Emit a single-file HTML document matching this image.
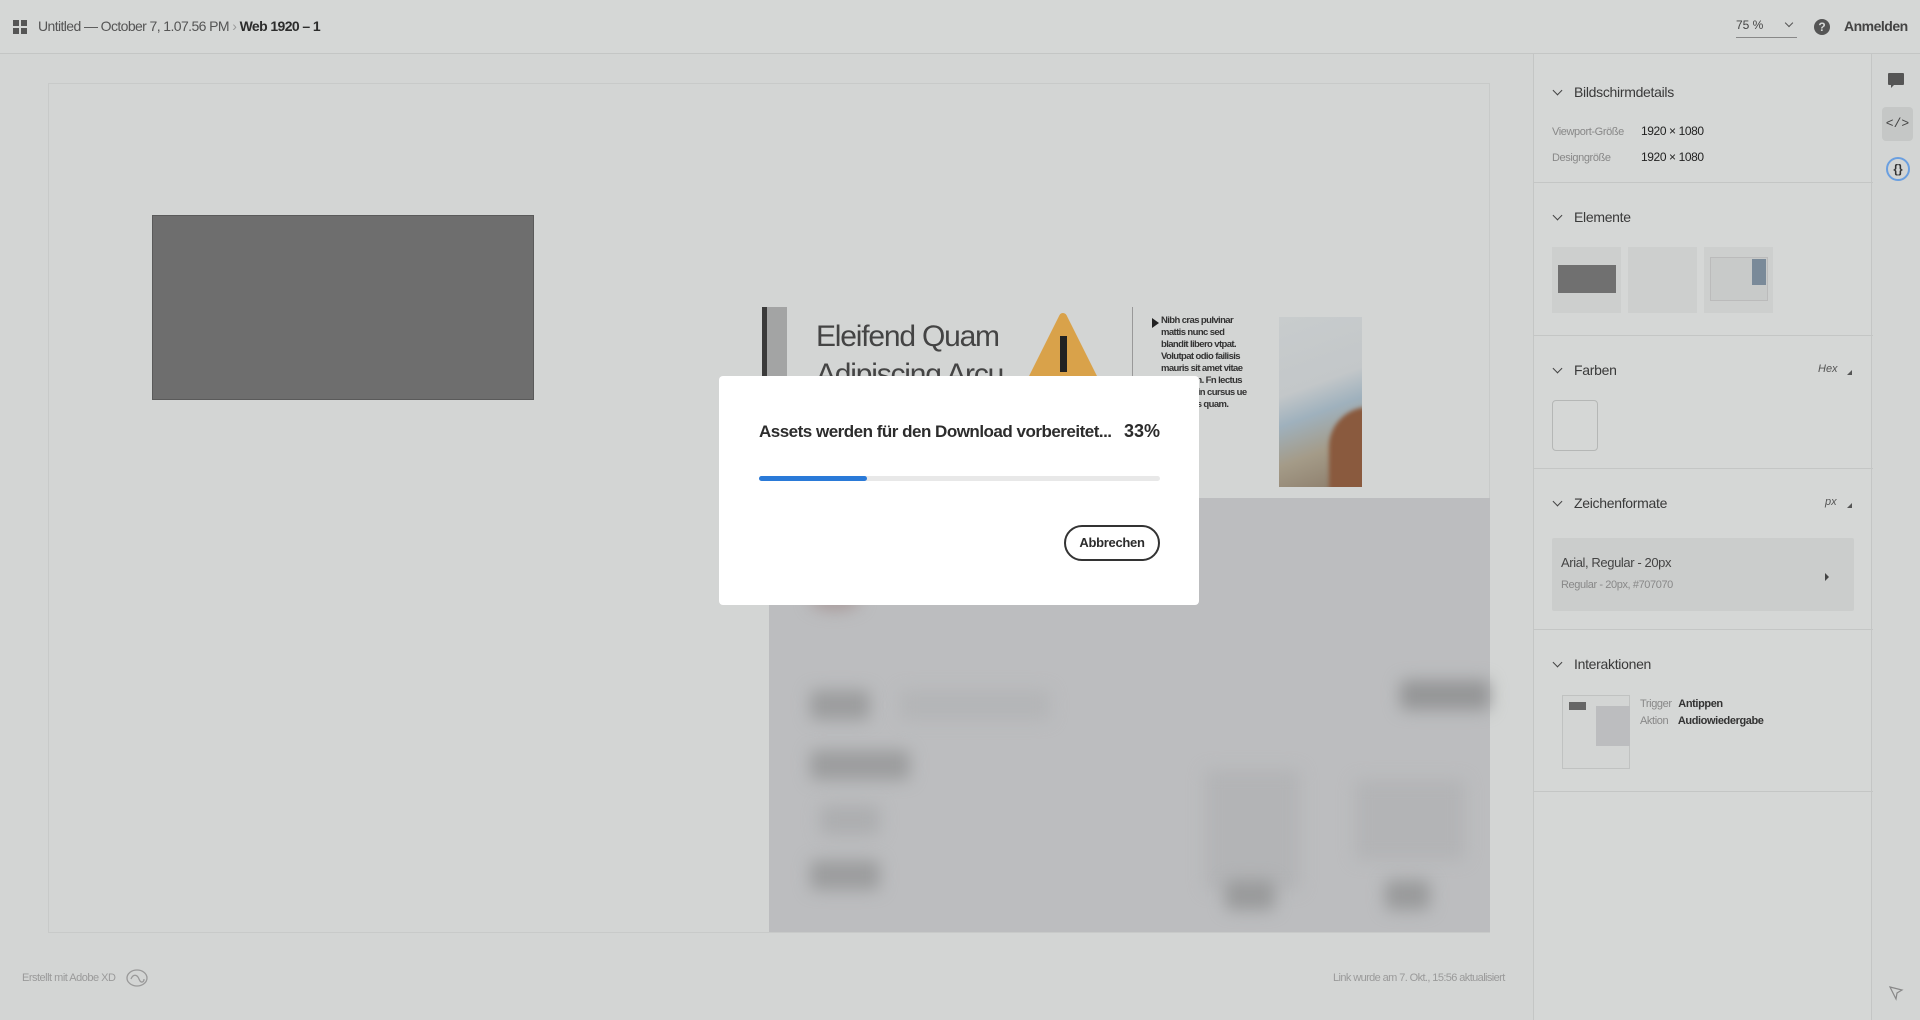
<!DOCTYPE html>
<html><head><meta charset="utf-8"><style>
*{margin:0;padding:0;box-sizing:border-box}
body{width:1920px;height:1020px;overflow:hidden;background:#d3d5d4;font-family:"Liberation Sans",sans-serif;color:#2c2c2c;position:relative}
.abs{position:absolute}
.hdr{left:0;top:0;width:1920px;height:54px;border-bottom:1px solid #c4c6c5;background:#d5d7d6}
.t{white-space:nowrap}
.panel{left:1533px;top:54px;width:339px;height:966px;border-left:1px solid #c4c6c5;border-right:1px solid #c4c6c5;background:#d5d7d6}
.sec{position:absolute;left:0;width:339px;border-bottom:1px solid #c4c6c5}
.sh{position:absolute;left:40px;font-size:14px;color:#3a3a3a;letter-spacing:-0.3px}
.chev{position:absolute;left:20px;width:7px;height:7px;border-right:1.6px solid #444;border-bottom:1.6px solid #444;transform:rotate(45deg)}
.lbl{font-size:11px;color:#888;letter-spacing:-0.4px}
.val{font-size:12px;color:#222;letter-spacing:-0.4px}
.blob{position:absolute;background:#9c9d9e;filter:blur(8px);border-radius:6px}
.corner{position:absolute;width:0;height:0;border-right:5px solid #555;border-top:5px solid transparent}
</style></head><body>
<div class="abs hdr"></div>
<div class="abs" style="left:13px;top:20px;width:6px;height:6px;background:#555"></div>
<div class="abs" style="left:21px;top:20px;width:6px;height:6px;background:#555"></div>
<div class="abs" style="left:13px;top:28px;width:6px;height:6px;background:#555"></div>
<div class="abs" style="left:21px;top:28px;width:6px;height:6px;background:#555"></div>
<div class="abs t" style="left:38px;top:18px;font-size:14px;color:#555;letter-spacing:-0.6px">Untitled — October 7, 1.07.56 PM <span style="color:#999">›</span> <b style="color:#2c2c2c">Web 1920 – 1</b></div>
<div class="abs t" style="left:1736px;top:18px;font-size:12px;color:#444">75 %</div>
<div class="abs" style="left:1786px;top:20px;width:6px;height:6px;border-right:1.5px solid #555;border-bottom:1.5px solid #555;transform:rotate(45deg)"></div>
<div class="abs" style="left:1736px;top:37px;width:61px;height:1px;background:#888"></div>
<div class="abs" style="left:1814px;top:19px;width:16px;height:16px;border-radius:50%;background:#555;color:#d5d7d6;font-size:12px;font-weight:bold;text-align:center;line-height:16px">?</div>
<div class="abs t" style="left:1844px;top:18px;font-size:14px;font-weight:bold;color:#444;letter-spacing:-0.5px">Anmelden</div>

<!-- artboard -->
<div class="abs" style="left:48px;top:83px;width:1442px;height:850px;border:1px solid #c8cac9;background:#d3d5d4"></div>
<div class="abs" style="left:152px;top:215px;width:382px;height:185px;background:#6e6e6e;border:1px solid #5a5a5a"></div>
<div class="abs" style="left:769px;top:498px;width:721px;height:434px;background:#bcbdbf"></div>
<div class="blob" style="left:810px;top:690px;width:60px;height:30px"></div>
<div class="blob" style="left:900px;top:690px;width:150px;height:30px;background:#b4b5b7"></div>
<div class="blob" style="left:810px;top:750px;width:100px;height:30px"></div>
<div class="blob" style="left:820px;top:805px;width:60px;height:30px;background:#adaeb0"></div>
<div class="blob" style="left:810px;top:860px;width:70px;height:30px"></div>
<div class="blob" style="left:1400px;top:680px;width:90px;height:30px;background:#959697"></div>
<div class="blob" style="left:1205px;top:770px;width:95px;height:120px;background:#b3b4b6"></div>
<div class="blob" style="left:1355px;top:780px;width:110px;height:80px;background:#b3b4b6"></div>
<div class="blob" style="left:1225px;top:880px;width:50px;height:30px;background:#999a9b"></div>
<div class="blob" style="left:1385px;top:880px;width:45px;height:30px;background:#999a9b"></div>
<div class="blob" style="left:810px;top:590px;width:50px;height:20px;background:#a89a9a;border-radius:50%"></div>

<div class="abs" style="left:762px;top:307px;width:25px;height:80px;background:#a3a4a4;border-left:5px solid #3a3a3a"></div>
<div class="abs t" style="left:816px;top:318px;font-size:30px;color:#444;line-height:38px;letter-spacing:-1.2px">Eleifend Quam<br>Adipiscing Arcu</div>
<svg class="abs" style="left:1020px;top:312px" width="90" height="80"><path d="M43 5 L8 75 L78 75 Z" fill="#d9a24a" stroke="#d9a24a" stroke-width="8" stroke-linejoin="round"/><rect x="40" y="24" width="7" height="36" fill="#222"/></svg>
<div class="abs" style="left:1132px;top:307px;width:1px;height:190px;background:#999"></div>
<div class="abs" style="left:1152px;top:318px;width:0;height:0;border-left:7px solid #222;border-top:5px solid transparent;border-bottom:5px solid transparent"></div>
<div class="abs" style="left:1161px;top:315px;font-size:9.5px;line-height:12px;color:#333;font-weight:bold;letter-spacing:-0.6px;width:88px">Nibh cras pulvinar mattis nunc sed blandit libero vtpat. Volutpat odio failisis mauris sit amet vitae dimentum. Fn lectus uris eros in cursus ue et leo duis quam.</div>
<div class="abs" style="left:1279px;top:317px;width:83px;height:170px;overflow:hidden;background:linear-gradient(160deg,#c8cccd 0%,#c3c7c9 40%,#9fb1bd 55%,#a49b88 75%,#8a7a68 100%)">
<div class="abs" style="left:50px;top:90px;width:50px;height:90px;background:#8a5a3e;border-radius:40px 0 0 0;filter:blur(2px)"></div></div>

<!-- modal -->
<div class="abs" style="left:719px;top:376px;width:480px;height:229px;background:#fff;border-radius:4px"></div>
<div class="abs t" style="left:759px;top:422px;font-size:17px;font-weight:bold;color:#2c2c2c;letter-spacing:-0.5px">Assets werden für den Download vorbereitet...</div>
<div class="abs t" style="left:1124px;top:421px;font-size:18px;font-weight:bold;color:#2c2c2c">33%</div>
<div class="abs" style="left:759px;top:476px;width:401px;height:5px;background:#e8e8e8;border-radius:3px"></div>
<div class="abs" style="left:759px;top:476px;width:108px;height:5px;background:#2a7ad8;border-radius:3px"></div>
<div class="abs" style="left:1064px;top:525px;width:96px;height:36px;border:2px solid #333;border-radius:18px;font-size:13px;font-weight:bold;text-align:center;line-height:32px;color:#2c2c2c;letter-spacing:-0.3px">Abbrechen</div>

<!-- footer -->
<div class="abs t" style="left:22px;top:972px;font-size:11px;color:#9a9a9a;letter-spacing:-0.5px">Erstellt mit Adobe XD</div>
<svg class="abs" style="left:125px;top:968px" width="24" height="20"><ellipse cx="12" cy="10" rx="10" ry="8" fill="none" stroke="#999" stroke-width="1.3"/><path d="M6 11c2-5 6-5 8 0s5 3 5 0" fill="none" stroke="#999" stroke-width="1.3"/></svg>
<div class="abs t" style="left:1333px;top:972px;font-size:11px;color:#9a9a9a;letter-spacing:-0.6px">Link wurde am 7. Okt., 15:56 aktualisiert</div>

<!-- panel -->
<div class="abs panel">
 <div class="sec" style="top:0;height:129px">
  <div class="chev" style="top:33px"></div><div class="sh t" style="top:30px">Bildschirmdetails</div>
  <div class="abs lbl t" style="left:18px;top:72px">Viewport-Größe</div><div class="abs val t" style="left:107px;top:70px">1920 × 1080</div>
  <div class="abs lbl t" style="left:18px;top:98px">Designgröße</div><div class="abs val t" style="left:107px;top:96px">1920 × 1080</div>
 </div>
 <div class="sec" style="top:129px;height:153px">
  <div class="chev" style="top:29px"></div><div class="sh t" style="top:26px">Elemente</div>
  <div class="abs" style="left:18px;top:64px;width:69px;height:66px;background:#cdcfce"><div class="abs" style="left:6px;top:18px;width:58px;height:28px;background:#707070"></div></div>
  <div class="abs" style="left:94px;top:64px;width:69px;height:66px;background:#cdcfce"></div>
  <div class="abs" style="left:170px;top:64px;width:69px;height:66px;background:#cdcfce"><div class="abs" style="left:6px;top:10px;width:58px;height:44px;background:#c8cac9;border:1px solid #bbb"></div><div class="abs" style="left:48px;top:12px;width:14px;height:26px;background:#7a8a99"></div></div>
 </div>
 <div class="sec" style="top:282px;height:133px">
  <div class="chev" style="top:29px"></div><div class="sh t" style="top:26px">Farben</div>
  <div class="abs t" style="left:284px;top:27px;font-size:11px;font-style:italic;color:#555">Hex</div>
  <div class="corner" style="left:313px;top:34px"></div>
  <div class="abs" style="left:18px;top:64px;width:46px;height:51px;border:1px solid #b5b7b6;border-radius:4px"></div>
 </div>
 <div class="sec" style="top:415px;height:161px">
  <div class="chev" style="top:29px"></div><div class="sh t" style="top:26px">Zeichenformate</div>
  <div class="abs t" style="left:291px;top:27px;font-size:11px;font-style:italic;color:#555">px</div>
  <div class="corner" style="left:313px;top:34px"></div>
  <div class="abs" style="left:18px;top:69px;width:302px;height:73px;background:#cbcdcc;border-radius:2px">
   <div class="abs t" style="left:9px;top:17px;font-size:13px;color:#444;letter-spacing:-0.4px">Arial, Regular - 20px</div>
   <div class="abs t" style="left:9px;top:41px;font-size:11px;color:#888;letter-spacing:-0.4px">Regular - 20px, #707070</div>
   <div class="abs" style="left:273px;top:35px;border-left:4px solid #444;border-top:4px solid transparent;border-bottom:4px solid transparent"></div>
  </div>
 </div>
 <div class="sec" style="top:576px;height:162px">
  <div class="chev" style="top:29px"></div><div class="sh t" style="top:26px">Interaktionen</div>
  <div class="abs" style="left:28px;top:65px;width:68px;height:74px;border:1px solid #c0c2c1;background:#d3d5d4"><div class="abs" style="left:6px;top:6px;width:17px;height:8px;background:#666"></div><div class="abs" style="left:33px;top:10px;width:34px;height:40px;background:#bcbdbf"></div></div>
  <div class="abs t" style="left:106px;top:68px;font-size:11px;color:#888;letter-spacing:-0.4px">Trigger <b style="color:#333;margin-left:4px">Antippen</b></div>
  <div class="abs t" style="left:106px;top:85px;font-size:11px;color:#888;letter-spacing:-0.4px">Aktion <b style="color:#333;margin-left:7px">Audiowiedergabe</b></div>
 </div>
</div>
<!-- right strip -->
<div class="abs" style="left:1888px;top:73px;width:16px;height:12px;background:#555;border-radius:1px"></div>
<div class="abs" style="left:1891px;top:84px;border-left:4px solid #555;border-bottom:4px solid transparent"></div>
<div class="abs" style="left:1882px;top:107px;width:31px;height:34px;background:#c5c7c6;border-radius:4px;font-size:13px;text-align:center;line-height:34px;color:#444;font-family:'Liberation Mono',monospace">&lt;/&gt;</div>
<div class="abs" style="left:1886px;top:157px;width:24px;height:24px;border:2px solid #6a9fe0;border-radius:50%;font-size:12px;text-align:center;line-height:20px;color:#333;font-weight:bold">{}</div>
<svg class="abs" style="left:1888px;top:985px" width="16" height="16"><path d="M2 2 L14 5 L9 8 L8 14 Z" fill="none" stroke="#888" stroke-width="1.2"/></svg>
</body></html>
